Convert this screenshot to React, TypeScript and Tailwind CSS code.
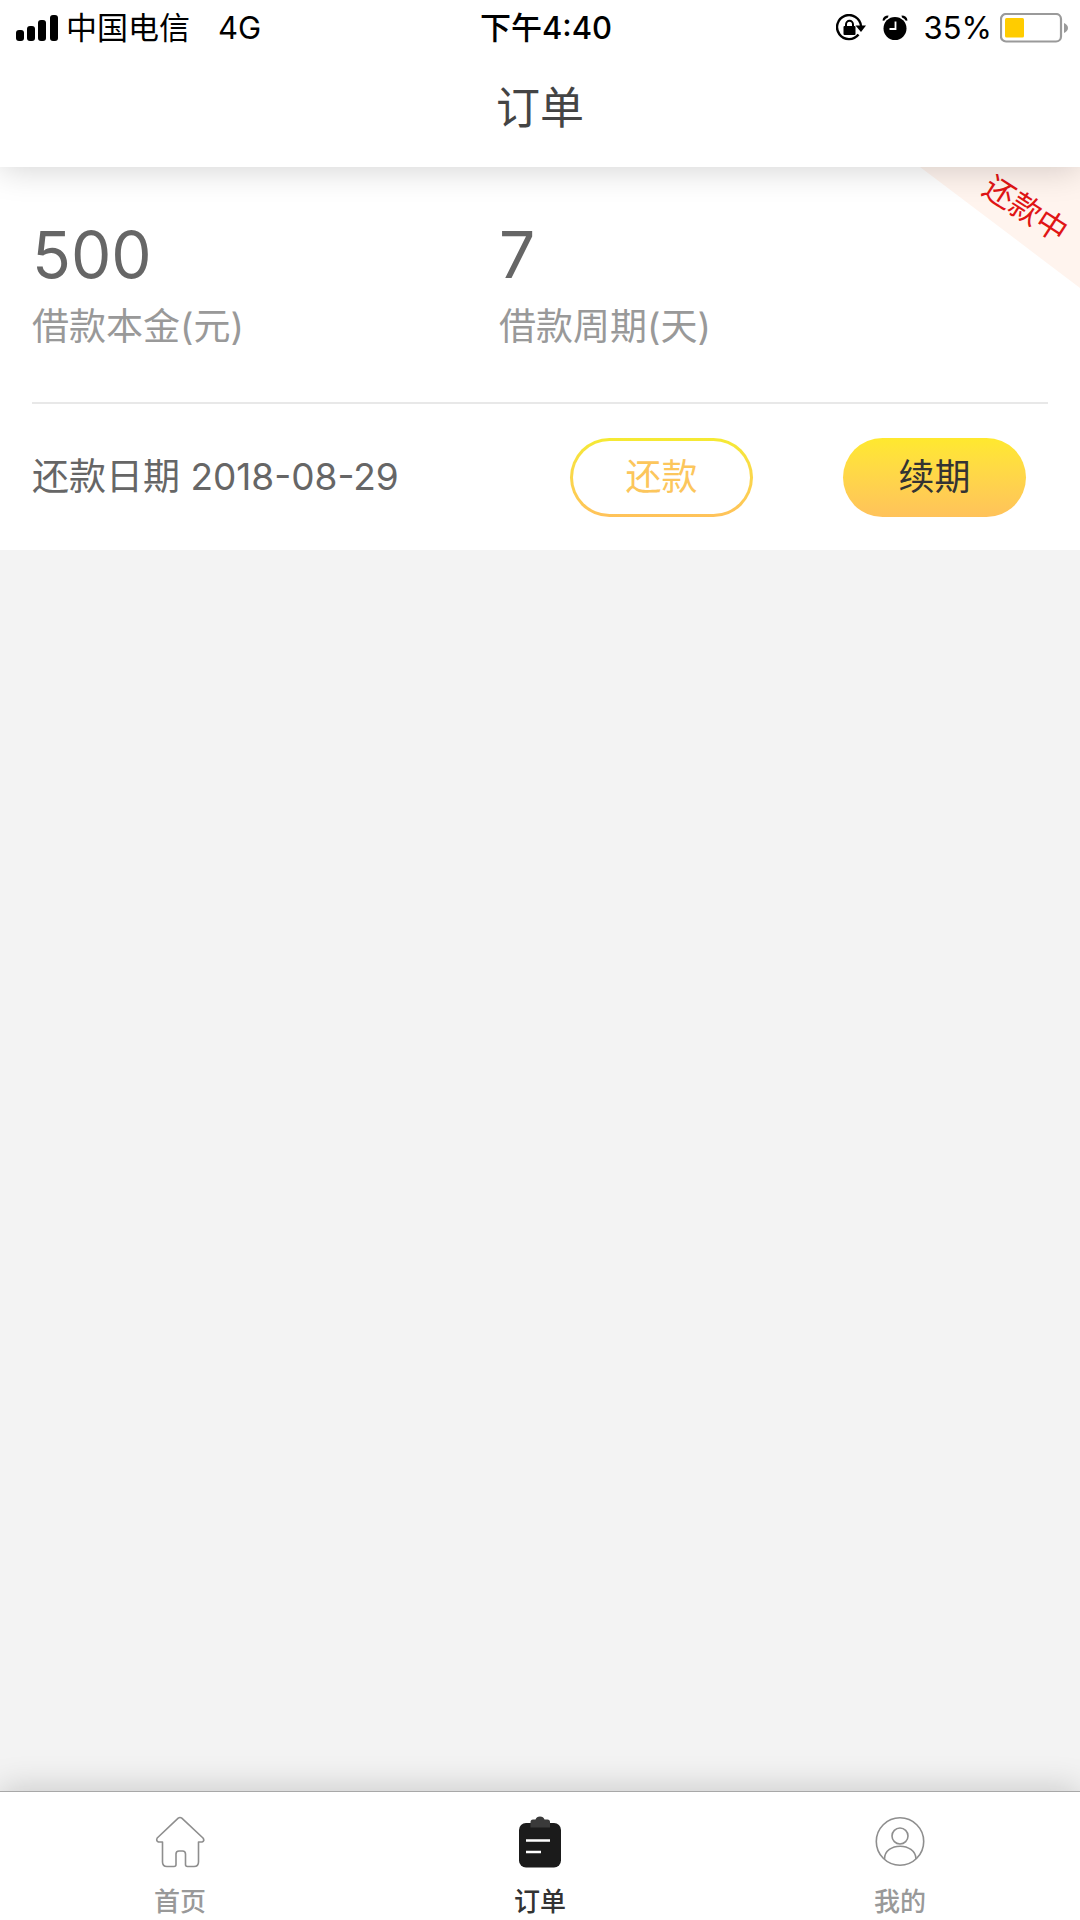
import React, { useState } from 'react';
import clsx from 'clsx';

type TabKey = 'home' | 'order' | 'mine';

interface Order {
  principal: number;
  days: number;
  repayDate: string;
  status: string;
}

const orders: Order[] = [
  { principal: 500, days: 7, repayDate: '2018-08-29', status: '还款中' },
];

const tabs: { key: TabKey; label: string }[] = [
  { key: 'home', label: '首页' },
  { key: 'order', label: '订单' },
  { key: 'mine', label: '我的' },
];

function SignalIcon() {
  return (
    <svg viewBox="0 0 42 26" className="w-[42px] h-[26px]" fill="#000">
      <rect x="0" y="15" width="8" height="11" rx="3" />
      <rect x="11" y="11" width="8" height="15" rx="3" />
      <rect x="22" y="5" width="8" height="21" rx="3" />
      <rect x="34" y="0" width="8" height="26" rx="3" />
    </svg>
  );
}

function RotationLockIcon() {
  return (
    <svg viewBox="0 0 30 28" className="w-[30px] h-7">
      {/* Ring with arrow */}
      <path d="M 22.5 20.5 A 12 12 0 1 1 25 12" fill="none" stroke="#000" strokeWidth="2.4" />
      <path d="M 19.5 11.5 H 30 L 25 18 Z" fill="#000" />
      {/* Padlock */}
      <rect x="7.5" y="12" width="12" height="9" rx="1" fill="#000" />
      <path d="M 10 13 V 10.5 A 3.5 3.8 0 0 1 17 10.5 V 13" fill="none" stroke="#000" strokeWidth="2" />
    </svg>
  );
}

function AlarmIcon() {
  return (
    <svg viewBox="0 0 26 26" className="w-[26px] h-[26px]">
      <circle cx="13" cy="13.5" r="11.5" fill="#000" />
      {/* Bells */}
      <path d="M 0.5 5.5 Q 1 0.5 6.5 0.5 L 6 2.5 Q 3.5 3.5 2.2 5.8 Z" fill="#000" />
      <path d="M 25.5 5.5 Q 25 0.5 19.5 0.5 L 20 2.5 Q 22.5 3.5 23.8 5.8 Z" fill="#000" />
      <path d="M 13.5 6.5 V 14 H 7.5" fill="none" stroke="#fff" strokeWidth="1.8" />
    </svg>
  );
}

function BatteryIcon() {
  return (
    <svg viewBox="0 0 68 30" className="w-[68px] h-[30px]">
      <rect x="1" y="1" width="60" height="27.5" rx="5" fill="#fff" stroke="#9a9a9a" strokeWidth="2.2" />
      <rect x="5" y="5" width="19" height="19.5" rx="1.5" fill="#fc0" />
      <path d="M 64 10 Q 68 12 68 15 Q 68 18 64 20 Z" fill="#9a9a9a" />
    </svg>
  );
}

function TabIcon({ name }: { name: TabKey }) {
  if (name === 'home') {
    return (
      <svg viewBox="0 0 50 52" className="w-[50px] h-[52px]" fill="none" stroke="#8e8e8e" strokeWidth="1.6" strokeLinejoin="round">
        <path d="M 23.2 2.2 Q 25 0.8 26.8 2.2 L 48 22 Q 50 25 47 26 H 43.5 V 46 Q 43.5 50.5 39 50.5 H 32.5 Q 30.5 50.5 30.5 48.5 V 38 Q 30.5 35 27.5 35 H 24 Q 21 35 21 38 V 48.5 Q 21 50.5 19 50.5 H 12 Q 7.5 50.5 7.5 46 V 26 H 3.5 Q 0.8 25 2.2 22 Z" />
      </svg>
    );
  }
  if (name === 'order') {
    return (
      <svg viewBox="0 0 50 52" className="w-[50px] h-[52px]">
        <rect x="4" y="7" width="42" height="44.5" rx="7" fill="#1b1b1b" />
        {/* Clip */}
        <path d="M 15.5 11.5 V 6 Q 15.5 3.5 18 3.5 H 20.5 Q 21.5 0.5 25 0.5 Q 28.5 0.5 29.5 3.5 H 32.5 Q 35 3.5 35 6 V 11.5 Z" fill="#3a3a3a" />
        <path d="M 11 24.5 H 35 M 11 36 H 26" stroke="#fff" strokeWidth="2.4" />
      </svg>
    );
  }
  return (
    <svg viewBox="0 0 50 52" className="w-[50px] h-[52px]" fill="none" stroke="#8e8e8e" strokeWidth="1.6">
      <circle cx="25" cy="25.5" r="23.7" />
      <circle cx="25" cy="20" r="8" />
      <path d="M 9.5 43 C 9.5 26 40.5 26 41 43" />
    </svg>
  );
}

function StatusBar() {
  return (
    <div className="grid grid-cols-[1fr_auto_1fr] items-center h-14 pl-4 pr-3 text-[31px] leading-10 text-black">
      <div className="flex items-center">
        <SignalIcon />
        <span className="ml-2">中国电信</span>
        <span className="ml-7">4G</span>
      </div>
      <span className="font-medium ml-2">下午4:40</span>
      <div className="flex items-center justify-end">
        <RotationLockIcon />
        <span className="ml-4"><AlarmIcon /></span>
        <span className="ml-4 mr-2">35%</span>
        <BatteryIcon />
      </div>
    </div>
  );
}

function OrderCard({ order }: { order: Order }) {
  return (
    <section className="relative overflow-hidden bg-white px-8">
      {/* Corner ribbon */}
      <div className="absolute top-0 right-0 w-40 h-[121px] bg-[#fff4ee] [clip-path:polygon(0_0,100%_0,100%_100%)]" />
      <span className="absolute top-6 right-2 rotate-[33deg] text-[31px] leading-9 text-[#e01515]">{order.status}</span>

      <div className="grid grid-cols-[467px_1fr] pt-12 pb-[43px]">
        <div>
          <p className="text-[64px] leading-20 text-[#666]">{order.principal}</p>
          <p className="text-[37px] leading-16 text-[#999]">借款本金(元)</p>
        </div>
        <div>
          <p className="text-[64px] leading-20 text-[#666]">{order.days}</p>
          <p className="text-[37px] leading-16 text-[#999]">借款周期(天)</p>
        </div>
      </div>

      <div className="flex items-center h-37 border-t-2 border-[#e8e8e8] pr-[22px]">
        <p className="flex-1 text-[37px] text-[#666]">还款日期 {order.repayDate}</p>
        <button className="w-[183px] h-[79px] rounded-full bg-linear-to-b from-[#f5ea33] to-[#ffc25a] p-[3px]">
          <span className="flex items-center justify-center w-full h-full rounded-full bg-white text-4xl text-[#fcc65c]">还款</span>
        </button>
        <button className="ml-[90px] w-[183px] h-[79px] rounded-full bg-linear-to-b from-[#ffe92e] to-[#ffc25a] text-4xl text-[#333]">
          续期
        </button>
      </div>
    </section>
  );
}

export default function App() {
  const [active, setActive] = useState<TabKey>('order');

  return (
    <div className="flex flex-col min-h-screen bg-[#f3f3f3] font-['Inter','Noto_Sans_CJK_SC',sans-serif]">
      <header className="relative z-10 bg-white shadow-[0_2px_32px_rgba(0,0,0,0.18)]">
        <StatusBar />
        <h1 className="pt-[22px] pb-[29px] text-center text-[44px] leading-15 text-[#444]">订单</h1>
      </header>

      <main className="flex-1">
        {orders.map((order) => (
          <OrderCard key={order.repayDate} order={order} />
        ))}
      </main>

      <nav className="relative grid grid-cols-3 bg-white border-t border-[#a8a8a8] shadow-[0_-2px_32px_rgba(0,0,0,0.18)]">
        {tabs.map((tab) => (
          <button
            key={tab.key}
            onClick={() => setActive(tab.key)}
            className={clsx(
              'flex flex-col items-center gap-4 pt-6 text-[26px] leading-9 font-medium',
              active === tab.key ? 'text-[#333]' : 'text-[#999]'
            )}
          >
            <TabIcon name={tab.key} />
            <span>{tab.label}</span>
          </button>
        ))}
      </nav>
    </div>
  );
}
